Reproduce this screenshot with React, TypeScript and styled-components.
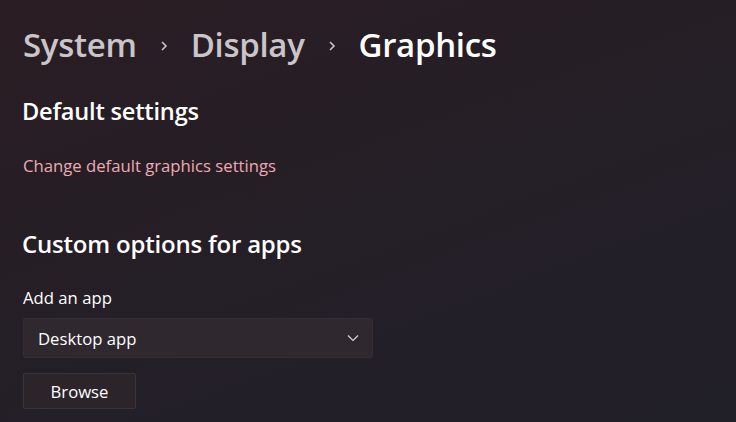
import React from "react";
import styled, { createGlobalStyle } from "styled-components";

const Global = createGlobalStyle`
  html, body { margin: 0; padding: 0; }
  body {
    width: 736px;
    height: 422px;
    overflow: hidden;
    background: #231f28;
    font-family: "Open Sans", "Noto Sans", sans-serif;
  }
`;

const Page = styled.div`
  width: 736px;
  height: 422px;
  box-sizing: border-box;
  padding: 21px 0 0 23px;
  background: linear-gradient(160deg, #2a1d23 0%, #261e25 35%, #231f28 70%, #211f28 100%);
  display: flex;
  flex-direction: column;
  color: #ffffff;
`;

const Breadcrumb = styled.nav`
  display: flex;
  align-items: center;
  height: 48px;
`;

const Crumb = styled.span<{ $current?: boolean }>`
  font-size: 33px;
  font-weight: 600;
  letter-spacing: -0.3px;
  color: ${(p) => (p.$current ? "#ffffff" : "#c9c5c9")};
  line-height: 48px;
`;

const Sep = styled.span`
  display: flex;
  align-items: center;
  justify-content: center;
  width: 54px;
  height: 48px;
  padding-top: 2px;
  box-sizing: border-box;
`;

const SectionTitle = styled.h2<{ $top: number; $size: number }>`
  margin: ${(p) => p.$top}px 0 0 -1px;
  font-size: ${(p) => p.$size}px;
  font-weight: 600;
  letter-spacing: -0.2px;
  line-height: 30px;
  color: #ffffff;
`;

const Link = styled.a`
  margin-top: 29px;
  font-size: 16.7px;
  line-height: 22px;
  color: #eeaab4;
  text-decoration: none;
`;

const Label = styled.div`
  margin-top: 28px;
  font-size: 16.7px;
  line-height: 22px;
  color: #ffffff;
`;

const Select = styled.div`
  margin-top: 9px;
  width: 350px;
  height: 40px;
  box-sizing: border-box;
  display: flex;
  align-items: center;
  justify-content: space-between;
  padding: 0 13px 0 14px;
  background: #2f282f;
  border: 1px solid #332c33;
  border-radius: 2px;
  font-size: 16.7px;
  color: #ffffff;
`;

const Button = styled.button`
  margin-top: 15px;
  width: 113px;
  height: 36px;
  box-sizing: border-box;
  background: #2c242b;
  border: 1px solid #3b333a;
  border-radius: 2px;
  color: #ffffff;
  font-family: inherit;
  font-size: 16.7px;
  padding: 0;
`;

const Chevron = () => (
  <svg width="8" height="12" viewBox="0 0 8 12" fill="none">
    <path d="M2 2 L6 6 L2 10" stroke="#c9c5c9" strokeWidth="1.6" />
  </svg>
);

const Down = () => (
  <svg width="12" height="8" viewBox="0 0 12 8" fill="none">
    <path d="M1 1.5 L6 6.5 L11 1.5" stroke="#d8d4d8" strokeWidth="1.2" />
  </svg>
);

export default function App() {
  return (
    <>
      <Global />
      <Page>
        <Breadcrumb>
          <Crumb>System</Crumb>
          <Sep>
            <Chevron />
          </Sep>
          <Crumb>Display</Crumb>
          <Sep>
            <Chevron />
          </Sep>
          <Crumb $current>Graphics</Crumb>
        </Breadcrumb>
        <SectionTitle $top={27} $size={23.6}>Default settings</SectionTitle>
        <Link href="#">Change default graphics settings</Link>
        <SectionTitle $top={52} $size={24}>Custom options for apps</SectionTitle>
        <Label>Add an app</Label>
        <Select>
          <span>Desktop app</span>
          <Down />
        </Select>
        <Button>Browse</Button>
      </Page>
    </>
  );
}
